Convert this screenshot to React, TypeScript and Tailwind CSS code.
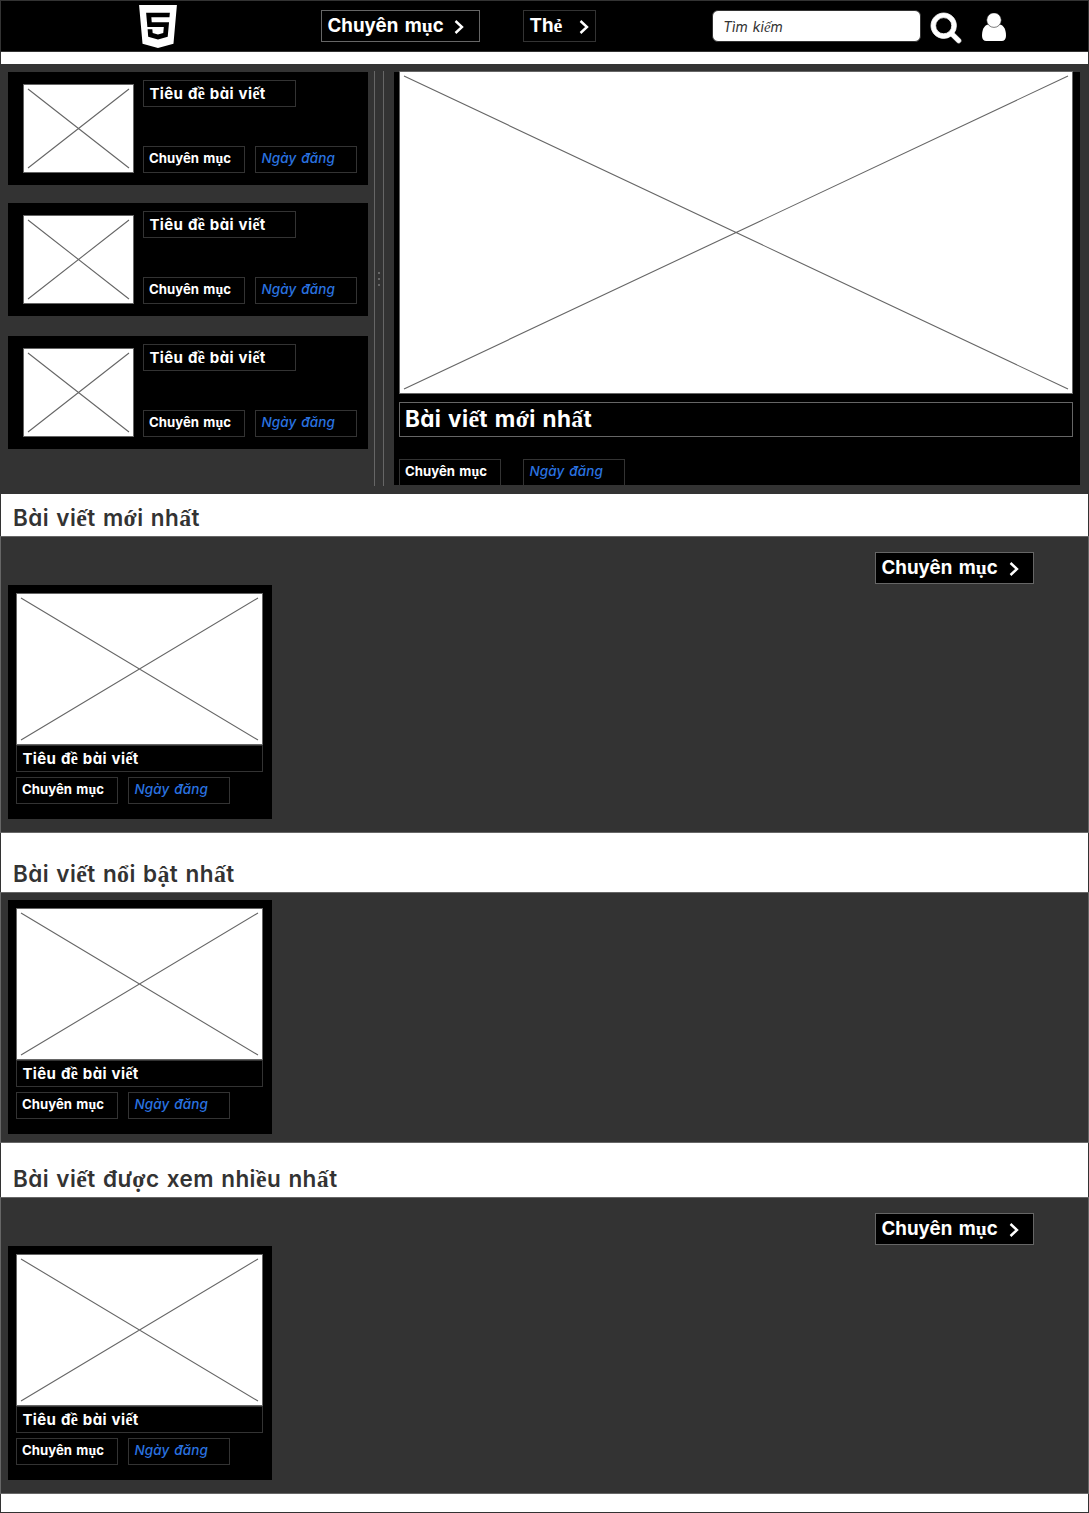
import type { ReactNode } from "react";

const SERIF = /([ếềụẻấớợổậ])/;

/** Text whose stacked-diacritic vowels are set in the serif companion face. */
function Mixed({ children }: { children: string }) {
  return (
    <>
      {children.split(SERIF).map((part, i) =>
        SERIF.test(part) ? (
          <span key={i} className="font-['Liberation_Serif',serif] text-[1.06em] leading-[0]">
            {part}
          </span>
        ) : (
          part
        ),
      )}
    </>
  );
}

function Picture({ w, h, className }: { w: number; h: number; className?: string }) {
  return (
    <svg width={w} height={h} viewBox={`0 0 ${w} ${h}`} className={`block shrink-0 ${className ?? ""}`}>
      <rect x="0.5" y="0.5" width={w - 1} height={h - 1} fill="#fff" stroke="#666" />
      <path d={`M5 5L${w - 5} ${h - 5}M5 ${h - 5}L${w - 5} 5`} stroke="#666" strokeWidth="1.1" fill="none" />
    </svg>
  );
}

function Category({ className = "h-[27px] border" }: { className?: string }) {
  return (
    <div className={`w-[102px] whitespace-nowrap border-[#333] pl-[5px] text-[13.2px] leading-[22px] font-bold tracking-[0px] [word-spacing:1.3px] ${className}`}>
      <Mixed>Chuyên mục</Mixed>
    </div>
  );
}

function PostDate({ className = "h-[27px] border" }: { className?: string }) {
  return (
    <div className={`w-[102px] whitespace-nowrap border-[#333] pl-[5.5px] text-[13.5px] leading-[22px] font-medium tracking-[0.12px] text-[#2a73e0] italic [word-spacing:1px] ${className}`}>
      Ngày đăng
    </div>
  );
}

function PostTitle({ className }: { className: string }) {
  return (
    <div className={`h-[27px] whitespace-nowrap border border-[#333] pl-[5.5px] text-[15px] leading-[26px] font-bold tracking-[0.35px] [word-spacing:0.8px] ${className}`}>
      <Mixed>Tiêu đề bài viết</Mixed>
    </div>
  );
}

function Dropdown({ label, className }: { label: string; className: string }) {
  return (
    <button className={`flex h-8 items-start justify-between border bg-black pl-[5.5px] text-left text-[18.7px] leading-[29px] font-bold whitespace-nowrap ${className}`}>
      <span className="tracking-[0px] [word-spacing:2px]">
        <Mixed>{label}</Mixed>
      </span>
      <svg width="10" height="16" viewBox="0 0 10 16" className="mt-[8px] shrink-0">
        <path d="M1.5 2L8 8L1.5 14" fill="none" stroke="#fff" strokeWidth="2.4" />
      </svg>
    </button>
  );
}

function SideCard() {
  return (
    <article className="flex h-[113px] w-[360px] bg-black pt-2 pl-[15px]">
      <Picture w={111} h={89} className="mt-1" />
      <div className="ml-[9px] flex h-[93px] flex-col justify-between">
        <PostTitle className="w-[153px]" />
        <div className="flex gap-[10px]">
          <Category />
          <PostDate />
        </div>
      </div>
    </article>
  );
}

function GridCard() {
  return (
    <article className="h-[234px] w-[264px] bg-black pt-2 pl-2">
      <Picture w={247} h={152} />
      <PostTitle className="w-[247px]" />
      <div className="mt-[5px] flex gap-[10px]">
        <Category />
        <PostDate />
      </div>
    </article>
  );
}

function Heading({ children, className }: { children: string; className: string }) {
  return (
    <h2 className={`border-x border-[#333] bg-white pl-3 text-[22.5px] font-semibold tracking-[0.42px] [word-spacing:1.2px] whitespace-nowrap text-[#333] ${className}`}>
      <Mixed>{children}</Mixed>
    </h2>
  );
}

function Section({ children, className }: { children: ReactNode; className: string }) {
  return <section className={`border border-[#666] bg-[#333] pl-[7px] ${className}`}>{children}</section>;
}

export default function App() {
  return (
    <div className="h-[1513px] w-[1089px] overflow-hidden border-b border-[#333] bg-white font-['Inter',sans-serif] text-white [font-feature-settings:'cv11']">
      <header className="flex h-[52px] items-start border border-[#333] bg-black">
        <svg width="38" height="43" viewBox="0 128 1408 1600" className="mt-1 ml-[138px]" fill="#fff">
          <path
            fillRule="evenodd"
            d="M1130 587l16-175h-884l47 534h612l-22 228-197 53-196-53-13-140h-175l22 278 362 100h4v-1l359-99 50-544h-644l-15-181h674zM0 128h1408l-128 1438-578 162-574-162z"
          />
        </svg>
        <Dropdown label="Chuyên mục" className="mt-[9px] ml-[144px] w-[159px] border-[#666] pr-[15px]" />
        <Dropdown label="Thẻ" className="mt-[9px] ml-[43px] w-[73px] border-[#333] pr-[6px]" />
        <div className="mt-[9px] ml-[116px] h-8 w-[209px] rounded-[6px] border border-[#333] bg-white pl-[10px] text-[14px] leading-[31px] text-[#333] italic [word-spacing:1.2px]">
          <Mixed>Tìm kiếm</Mixed>
        </div>
        <svg
          width="30"
          height="30"
          viewBox="64 128 1664 1664"
          className="mt-3 ml-[10px] overflow-visible"
          fill="#fff"
          stroke="#fff"
          strokeWidth="44"
        >
          <path d="M1216 832q0-185-131.5-316.5t-316.5-131.5-316.5 131.5-131.5 316.5 131.5 316.5 316.5 131.5 316.5-131.5 131.5-316.5zm512 832q0 52-38 90t-90 38q-54 0-90-38l-343-342q-179 124-399 124-143 0-273.5-55.5t-225-150-150-225-55.5-273.5 55.5-273.5 150-225 225-150 273.5-55.5 273.5 55.5 225 150 150 225 55.5 273.5q0 220-124 399l343 343q37 37 37 90z" />
        </svg>
        <svg width="24" height="28" viewBox="0 0 24 28" className="mt-3 ml-[21px]" fill="#fff">
          <path d="M6 11.6C2 12.4 0 17 0 23c0 3 1.9 5 4.2 5h15.6c2.3 0 4.2-2 4.2-5 0-6-2-10.6-6-11.4z" />
          <circle cx="12" cy="7.1" r="7.3" stroke="#222" strokeWidth="0.6" />
        </svg>
      </header>

      <div className="h-3 border-x border-[#333]" />

      <section className="flex h-[430px] bg-[#333] pl-2">
        <div className="flex w-[360px] flex-col pt-2">
          <SideCard />
          <div className="mt-[18px]">
            <SideCard />
          </div>
          <div className="mt-5">
            <SideCard />
          </div>
        </div>
        <div className="mt-[7px] ml-[6px] flex h-[415px] w-[10px] flex-col items-center gap-1 border-x border-[#666] pt-[201px]">
          <i className="size-[2px] bg-[#666]" />
          <i className="size-[2px] bg-[#666]" />
          <i className="size-[2px] bg-[#666]" />
        </div>
        <article className="mt-2 ml-[10px] flex h-[413px] w-[686px] flex-col bg-black pl-[5px]">
          <Picture w={674} h={323} className="-mt-px" />
          <h1 className="mt-2 h-[35px] w-[674px] border border-[#666] pl-[5px] text-[22.5px] leading-[31px] font-bold tracking-[0.35px] [word-spacing:1.2px]">
            <Mixed>Bài viết mới nhất</Mixed>
          </h1>
          <div className="mt-[22px] flex gap-[22px]">
            <Category className="h-[26px] border border-b-0" />
            <PostDate className="h-[26px] border border-b-0" />
          </div>
        </article>
      </section>

      <Heading className="h-[42px] leading-[47px]">Bài viết mới nhất</Heading>
      <Section className="h-[297px] pt-[15px]">
        <Dropdown label="Chuyên mục" className="ml-[867px] w-[159px] border-[#666] pr-[14px]" />
        <div className="mt-px">
          <GridCard />
        </div>
      </Section>

      <Heading className="h-[59px] leading-[81px]">Bài viết nổi bật nhất</Heading>
      <Section className="h-[251px] pt-[7px]">
        <GridCard />
      </Section>

      <Heading className="h-[54px] leading-[71px]">Bài viết được xem nhiều nhất</Heading>
      <Section className="h-[297px] pt-[15px]">
        <Dropdown label="Chuyên mục" className="ml-[867px] w-[159px] border-[#666] pr-[14px]" />
        <div className="mt-px">
          <GridCard />
        </div>
      </Section>
      <div className="h-[18px] border-x border-[#333]" />
    </div>
  );
}
